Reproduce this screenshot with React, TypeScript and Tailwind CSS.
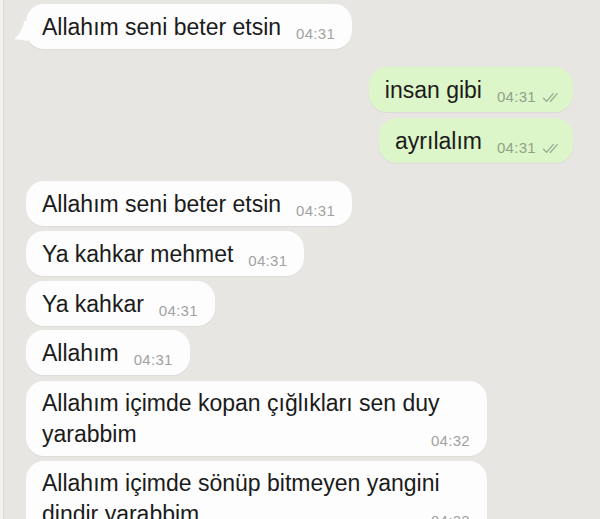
import * as React from "react"

type Msg = {
  id: number
  out?: boolean
  lines: string[]
  time: string
  tail?: boolean
  gap: string
}

const messages: Msg[] = [
  { id: 1, lines: ["Allahım seni beter etsin"], time: "04:31", tail: true, gap: "mt-[4px]" },
  { id: 2, out: true, lines: ["insan gibi"], time: "04:31", gap: "mt-[18px]" },
  { id: 3, out: true, lines: ["ayrılalım"], time: "04:31", gap: "mt-[6px]" },
  { id: 4, lines: ["Allahım seni beter etsin"], time: "04:31", gap: "mt-[18px]" },
  { id: 5, lines: ["Ya kahkar mehmet"], time: "04:31", gap: "mt-[5px]" },
  { id: 6, lines: ["Ya kahkar"], time: "04:31", gap: "mt-[5px]" },
  { id: 7, lines: ["Allahım"], time: "04:31", gap: "mt-[4px]" },
  { id: 8, lines: ["Allahım içimde kopan çığlıkları sen duy", "yarabbim"], time: "04:32", gap: "mt-[6px]" },
  { id: 9, lines: ["Allahım içimde sönüp bitmeyen yangini", "dindir yarabbim"], time: "04:32", gap: "mt-[5px]" },
]

function DoubleCheck() {
  return (
    <svg width="19" height="11" viewBox="0 0 19 11" fill="none" className="shrink-0">
      <path d="M1.5 6.2 L4.6 9.4 L11.2 1.6" stroke="#94a98f" strokeWidth="1.3" strokeLinecap="round" strokeLinejoin="round" />
      <path d="M8.4 9.4 L15.2 1.6" stroke="#94a98f" strokeWidth="1.3" strokeLinecap="round" />
    </svg>
  )
}

function Time({ time, out }: { time: string; out?: boolean }) {
  return (
    <span
      className={`flex items-center gap-[6px] shrink-0 ml-[15px] text-[15px] leading-[18px] tracking-[0.3px] ${
        out ? "text-[#8ea288]" : "text-[#a2a2a2]"
      }`}
    >
      {time}
      {out && <DoubleCheck />}
    </span>
  )
}

function Bubble({ msg }: { msg: Msg }) {
  const multi = msg.lines.length > 1
  const base = msg.out
    ? "self-end mr-[27px] bg-[#ddf6c9] pl-[16px] pr-[12px]"
    : "self-start ml-[22px] bg-[#fdfdfd] pl-[16px] pr-[17px]"

  if (multi) {
    return (
      <div
        className={`${msg.gap} ${base} relative w-[461px] pt-[7px] pb-[6px] rounded-[18px] shadow-[0_1px_1px_rgba(0,0,0,0.05)]`}
      >
        <p className="leading-[31px]">{msg.lines[0]}</p>
        <div className="flex items-end justify-between">
          <span className="leading-[31px]">{msg.lines[1]}</span>
          <Time time={msg.time} out={msg.out} />
        </div>
      </div>
    )
  }

  return (
    <div
      className={`${msg.gap} ${base} relative flex items-end pt-[8px] pb-[6px] rounded-[18px] shadow-[0_1px_1px_rgba(0,0,0,0.05)]`}
    >
      {msg.tail && (
        <svg width="14" height="20" viewBox="0 0 14 20" className="absolute left-[-12px] top-[17px]">
          <path d="M14 0 L14 20 C9 19 4 18.5 0 18 C5 14 9 8 10 0 Z" fill="#fdfdfd" />
        </svg>
      )}
      <span className="leading-[31px] whitespace-nowrap">{msg.lines[0]}</span>
      <Time time={msg.time} out={msg.out} />
    </div>
  )
}

export default function App() {
  return (
    <div className="flex h-[519px] w-[600px] overflow-hidden bg-[#e8e6e3] font-['Liberation_Sans',Arial,sans-serif] text-[23px] text-[#1b1b1b]">
      <div className="w-[3px] shrink-0 bg-[#f3f2f0]" />
      <div className="w-px shrink-0 bg-[#dddad6]" />
      <div className="flex flex-1 flex-col">
        {messages.map((m) => (
          <Bubble key={m.id} msg={m} />
        ))}
      </div>
    </div>
  )
}
